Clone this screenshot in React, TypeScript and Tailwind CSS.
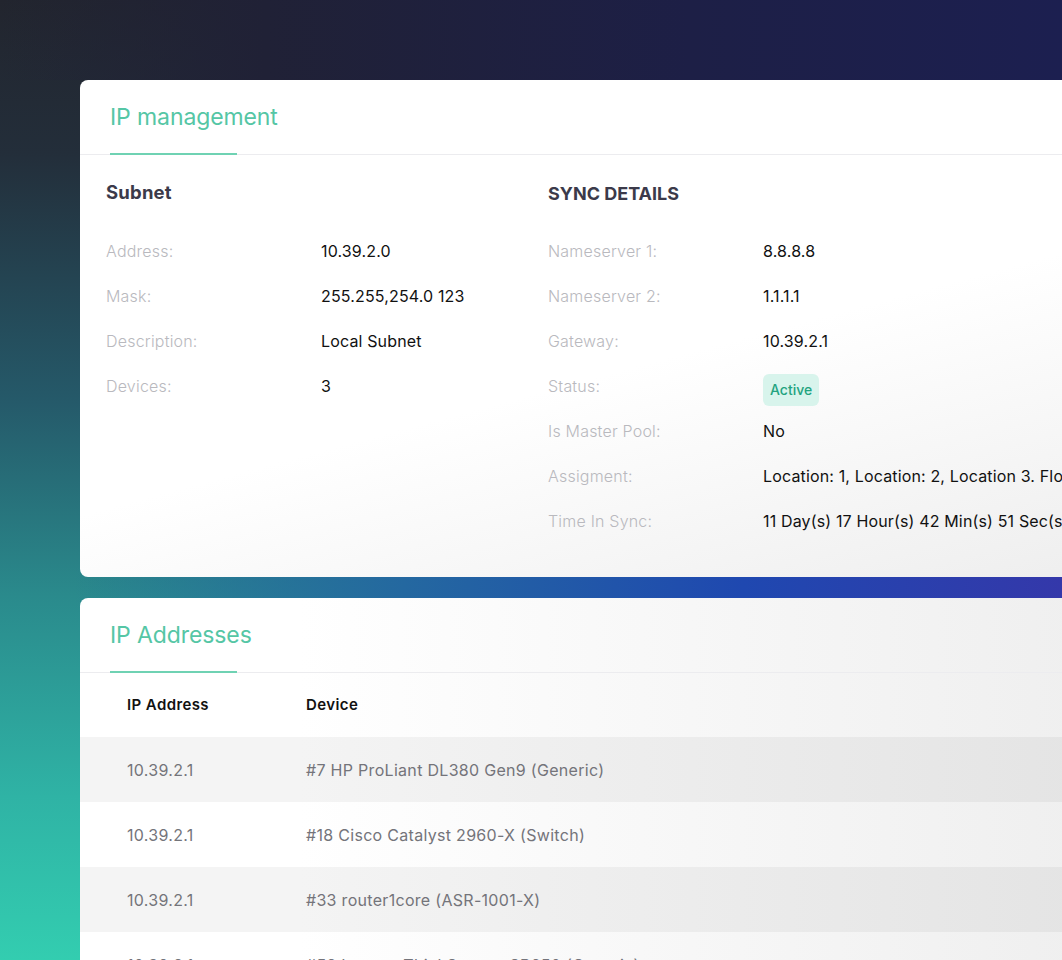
const subnet = [
  { label: 'Address:', value: '10.39.2.0' },
  { label: 'Mask:', value: '255.255,254.0 123' },
  { label: 'Description:', value: 'Local Subnet' },
  { label: 'Devices:', value: '3' },
];

const sync = [
  { label: 'Nameserver 1:', value: '8.8.8.8' },
  { label: 'Nameserver 2:', value: '1.1.1.1' },
  { label: 'Gateway:', value: '10.39.2.1' },
  { label: 'Status:', value: 'Active', badge: true },
  { label: 'Is Master Pool:', value: 'No' },
  { label: 'Assigment:', value: 'Location: 1, Location: 2, Location 3. Floor 2, Rack 4' },
  { label: 'Time In Sync:', value: '11 Day(s) 17 Hour(s) 42 Min(s) 51 Sec(s)' },
];

const addresses = [
  { ip: '10.39.2.1', device: '#7 HP ProLiant DL380 Gen9 (Generic)' },
  { ip: '10.39.2.1', device: '#18 Cisco Catalyst 2960-X (Switch)' },
  { ip: '10.39.2.1', device: '#33 router1core (ASR-1001-X)' },
  { ip: '10.39.2.1', device: '#52 Lenovo ThinkSystem SR650 (Generic)' },
];

function CardHeader({ title }: { title: string }) {
  return (
    <div className="h-[75px] border-b border-[#ececef] px-[30px] flex items-end">
      <div className="relative h-full flex items-center">
        <h2 className="text-[23px] font-normal text-[#55c6a5] tracking-[-0.1px]">{title}</h2>
        <div className="absolute left-0 bottom-[-1px] w-[127px] h-[2px] bg-[#6fd2b3]" />
      </div>
    </div>
  );
}

function Row({ label, value, badge }: { label: string; value: string; badge?: boolean }) {
  return (
    <div className="h-[45px] flex items-center">
      <span className="w-[215px] shrink-0 text-[16px] font-light tracking-[0.2px] text-[#b9b9be]">{label}</span>
      {badge ? (
        <span className="mt-2 h-[32px] px-[7px] flex items-center rounded-md bg-[#d8f4ec] text-[14px] font-medium text-[#23a37f]">
          {value}
        </span>
      ) : (
        <span className="text-[16px] tracking-[0.15px] text-[#111] whitespace-nowrap">{value}</span>
      )}
    </div>
  );
}

export default function App() {
  return (
    <div className="h-[960px] overflow-hidden pl-[80px] pt-[80px] font-['Inter',sans-serif] bg-no-repeat bg-[linear-gradient(to_right,rgba(42,138,140,0)_0%,rgba(42,138,140,0)_7%,#2468a0_38%,#1f48b0_70%,#3438aa_100%),linear-gradient(to_right,rgba(34,37,46,0)_0%,#202136_25%,#1d1f46_65%,#1c1f50_100%),linear-gradient(to_bottom,#22252e_0%,#232e3a_16%,#255a6a_42%,#2a8a8c_62%,#2fb3a5_83%,#33cdb0_100%)] bg-[length:100%_40px,100%_80px,100%_100%] bg-[position:0_568px,0_0,0_0]">
      <div className="w-[1100px] flex flex-col gap-[21px]">
        <section className="rounded-lg overflow-hidden bg-[linear-gradient(165deg,#ffffff_0%,#ffffff_55%,#ededed_100%)]">
          <CardHeader title="IP management" />
          <div className="flex pl-[26px] pt-[24px] pb-[34px]">
            <div className="w-[442px] shrink-0">
              <h3 className="h-[28px] flex items-center text-[18.5px] font-bold tracking-[0.2px] text-[#3b3a4a]">Subnet</h3>
              <div className="mt-[21px]">
                {subnet.map((r) => (
                  <Row key={r.label} {...r} />
                ))}
              </div>
            </div>
            <div>
              <h3 className="h-[28px] flex items-center text-[18px] font-bold text-[#3b3a4a]">SYNC DETAILS</h3>
              <div className="mt-[21px]">
                {sync.map((r) => (
                  <Row key={r.label} {...r} />
                ))}
              </div>
            </div>
          </div>
        </section>

        <section className="rounded-t-lg overflow-hidden bg-[linear-gradient(to_right,#ffffff_0%,#ffffff_20%,#ededed_100%)]">
          <CardHeader title="IP Addresses" />
          <div className="h-[64px] flex items-center px-[47px] text-[15px] font-semibold tracking-[0.4px] text-[#111]">
            <span className="w-[179px]">IP Address</span>
            <span>Device</span>
          </div>
          {addresses.map((a, i) => (
            <div
              key={i}
              className={`h-[65px] flex items-center px-[47px] text-[16px] tracking-[0.3px] text-[#74747a] ${
                i % 2 === 0 ? 'bg-black/[0.045]' : ''
              }`}
            >
              <span className="w-[179px]">{a.ip}</span>
              <span>{a.device}</span>
            </div>
          ))}
        </section>
      </div>
    </div>
  );
}
